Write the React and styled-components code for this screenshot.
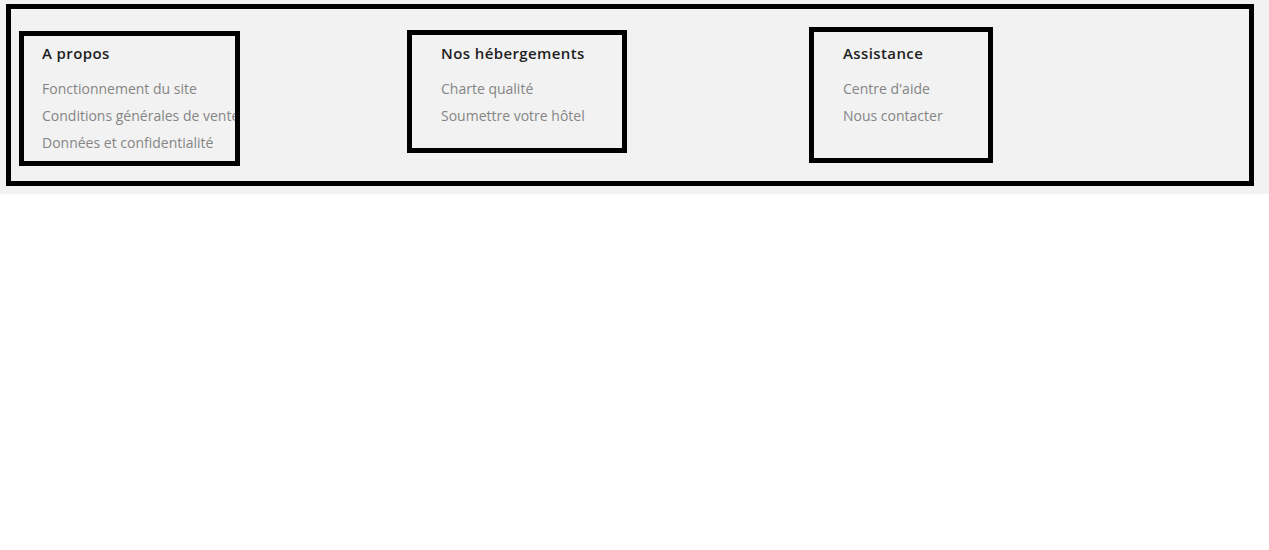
import React from "react";
import styled, { createGlobalStyle } from "styled-components";

const GlobalStyle = createGlobalStyle`
  body {
    margin: 0;
    background: #ffffff;
    font-family: "Open Sans", "Lato", sans-serif;
  }
`;

const columns = [
  {
    title: "A propos",
    links: ["Fonctionnement du site", "Conditions générales de vente", "Données et confidentialité"],
    box: { top: 22, width: 221, height: 135, padTop: 17, padLeft: 18 },
  },
  {
    title: "Nos hébergements",
    links: ["Charte qualité", "Soumettre votre hôtel"],
    box: { top: 21, width: 220, height: 123, padTop: 18, padLeft: 29 },
  },
  {
    title: "Assistance",
    links: ["Centre d'aide", "Nous contacter"],
    box: { top: 18, width: 184, height: 136, padTop: 21, padLeft: 29 },
  },
];

const App = () => {
  return (
    <>
      <GlobalStyle />
      <StFooter>
        <StFrame>
          {columns.map((col) => (
            <StColumn key={col.title}>
              <StBox {...col.box}>
                <StTitle>{col.title}</StTitle>
                <StList>
                  {col.links.map((link) => (
                    <li key={link}>
                      <StLink href="#">{link}</StLink>
                    </li>
                  ))}
                </StList>
              </StBox>
            </StColumn>
          ))}
        </StFrame>
      </StFooter>
    </>
  );
};

export default App;

const StFooter = styled.footer`
  width: 100%;
  height: 194px;
  box-sizing: border-box;
  background: #f2f2f2;
  padding: 4px 15px 0 6px;
`;

const StFrame = styled.div`
  height: 182px;
  box-sizing: border-box;
  border: 5px solid #000;
  display: grid;
  grid-template-columns: 388px 402px 1fr;
  padding-left: 8px;
`;

const StColumn = styled.div`
  display: flex;
  align-items: flex-start;
`;

const StBox = styled.div`
  margin-top: ${(p) => p.top}px;
  width: ${(p) => p.width}px;
  height: ${(p) => p.height}px;
  box-sizing: border-box;
  border: 5px solid #000;
  padding: ${(p) => p.padTop - 9}px 0 0 ${(p) => p.padLeft}px;
  overflow: hidden;
`;

const StTitle = styled.h3`
  margin: 0;
  font-size: 15px;
  line-height: 18px;
  font-weight: 600;
  letter-spacing: 0.4px;
  color: #1f1f1f;
  white-space: nowrap;
`;

const StList = styled.ul`
  list-style: none;
  margin: 18px 0 0;
  padding: 0;
  display: flex;
  flex-direction: column;
  gap: 9px;
`;

const StLink = styled.a`
  display: block;
  font-size: 14px;
  line-height: 18px;
  color: #858585;
  text-decoration: none;
  white-space: nowrap;
`;
